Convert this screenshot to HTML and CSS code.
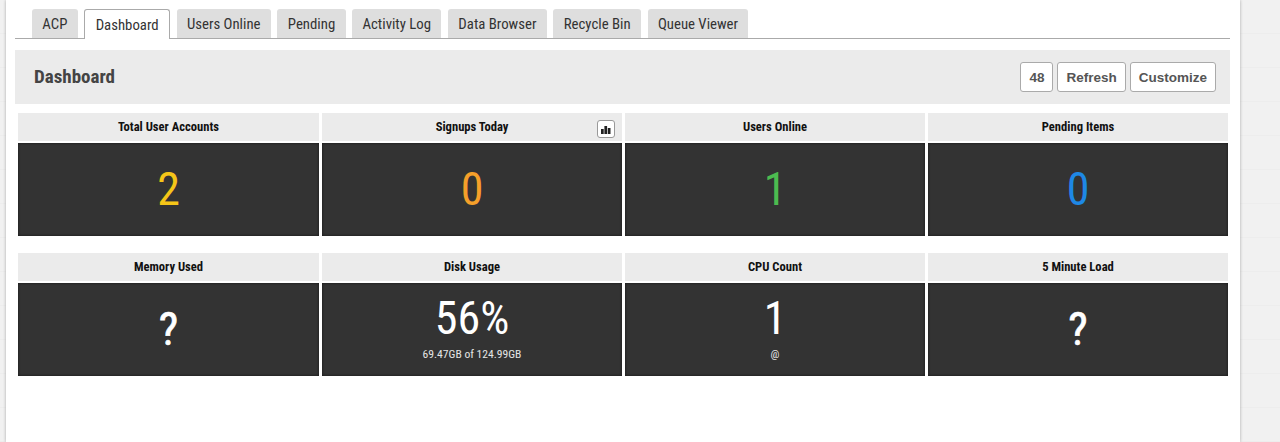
FILE: index.html
```html
<!DOCTYPE html>
<html lang="en">
<head>
  <meta charset="UTF-8" />
  <title>Dashboard</title>
  <link rel="stylesheet" href="styles.css">
</head>
<body>
  <div class="page">

    <div class="tabs">
      <a class="tab">ACP</a>
      <a class="tab active">Dashboard</a>
      <a class="tab">Users Online</a>
      <a class="tab">Pending</a>
      <a class="tab">Activity Log</a>
      <a class="tab">Data Browser</a>
      <a class="tab">Recycle Bin</a>
      <a class="tab">Queue Viewer</a>
    </div>

    <div class="header">
      <h1>Dashboard</h1>
      <div class="actions">
        <button class="btn">48</button>
        <button class="btn">Refresh</button>
        <button class="btn">Customize</button>
      </div>
    </div>

    <div class="widgets">
      <div class="widget">
        <div class="widget-title">Total User Accounts</div>
        <div class="widget-body"><span class="value yellow">2</span></div>
      </div>
      <div class="widget">
        <div class="widget-title">Signups Today
          <span class="chart-btn">
            <svg width="10" height="9" viewBox="0 0 10 9"><path d="M0 4h2.7v5H0zM3.4 1h2.7v8H3.4zM6.8 3h2.7v6H6.8z" fill="#222"/></svg>
          </span>
        </div>
        <div class="widget-body"><span class="value orange">0</span></div>
      </div>
      <div class="widget">
        <div class="widget-title">Users Online</div>
        <div class="widget-body"><span class="value green">1</span></div>
      </div>
      <div class="widget">
        <div class="widget-title">Pending Items</div>
        <div class="widget-body"><span class="value blue">0</span></div>
      </div>
      <div class="widget">
        <div class="widget-title">Memory Used</div>
        <div class="widget-body"><span class="value unknown">?</span></div>
      </div>
      <div class="widget">
        <div class="widget-title">Disk Usage</div>
        <div class="widget-body">
          <span class="value">56%</span>
          <span class="sub">69.47GB of 124.99GB</span>
        </div>
      </div>
      <div class="widget">
        <div class="widget-title">CPU Count</div>
        <div class="widget-body">
          <span class="value">1</span>
          <span class="sub">@</span>
        </div>
      </div>
      <div class="widget">
        <div class="widget-title">5 Minute Load</div>
        <div class="widget-body"><span class="value unknown">?</span></div>
      </div>
    </div>

  </div>
</body>
</html>
```

FILE: styles.css
```css
* {
  box-sizing: border-box;
}
html, body {
  height: 100%;
}
body {
  margin: 0;
  background-color: #f1f1f1;
  background-image: repeating-linear-gradient(0deg, #ededed 0, #ededed 1px, transparent 1px, transparent 34px);
  font-family: Roboto, "Liberation Sans", sans-serif;
  font-stretch: 75%;
  overflow: hidden;
}
.page {
  width: 1234px;
  height: 100%;
  margin-left: 6px;
  padding: 9px 10px 0 9px;
  background: #fff;
  box-shadow: 0 0 3px rgba(0, 0, 0, 0.3);
}
.tabs {
  display: flex;
  gap: 6.6px;
  height: 30px;
  padding-left: 17px;
  border-bottom: 1px solid #aaa;
}
.tab {
  height: 29px;
  padding: 0 10.35px;
  line-height: 30px;
  font-size: 14.8px;
  color: #333;
  background: #dedede;
  border-radius: 3px 3px 0 0;
}
.tab.active {
  height: 30px;
  background: #fff;
  border: 1px solid #aaa;
  border-bottom: none;
}
.header {
  display: flex;
  justify-content: space-between;
  align-items: center;
  height: 54px;
  margin-top: 11px;
  padding: 0 14px 0 19px;
  background: #ebebeb;
}
.header h1 {
  margin: 0 0 2px;
  font-size: 19px;
  font-weight: 700;
  color: #444;
}
.actions {
  display: flex;
  gap: 4px;
}
.btn {
  height: 30px;
  padding: 0 8px;
  font-family: "Liberation Sans", Arial, sans-serif;
  font-size: 13.5px;
  font-weight: 700;
  color: #555;
  background: #fff;
  border: 1px solid #aaa;
  border-radius: 3px;
}
.widgets {
  display: grid;
  grid-template-columns: 301px 300px 300px 300px;
  column-gap: 3px;
  row-gap: 17px;
  margin: 9px 2px 0 3px;
}
.widget-title {
  position: relative;
  height: 28px;
  margin-bottom: 2px;
  line-height: 28px;
  text-align: center;
  font-size: 12.6px;
  font-weight: 700;
  color: #111;
  background: #ebebeb;
}
.chart-btn {
  position: absolute;
  top: 7px;
  right: 7px;
  display: flex;
  align-items: center;
  justify-content: center;
  width: 18px;
  height: 18px;
  background: #fff;
  border: 1px solid #999;
  border-radius: 3px;
}
.widget-body {
  display: flex;
  flex-direction: column;
  align-items: center;
  justify-content: center;
  height: 93px;
  padding-bottom: 2px;
  color: #fff;
  background: #333;
  box-shadow: inset 0 0 3px rgba(0, 0, 0, 0.6);
}
.value {
  font-size: 46px;
  line-height: 54px;
}
.unknown {
  -webkit-text-stroke: 0.7px #fff;
}
.sub {
  margin: 2px 0 6px;
  font-size: 11.6px;
  line-height: 14px;
  color: #e5e5e5;
}
.yellow {
  color: #f5c518;
}
.orange {
  color: #f5a02a;
}
.green {
  color: #4cbb50;
}
.blue {
  color: #1e88e5;
}
```
